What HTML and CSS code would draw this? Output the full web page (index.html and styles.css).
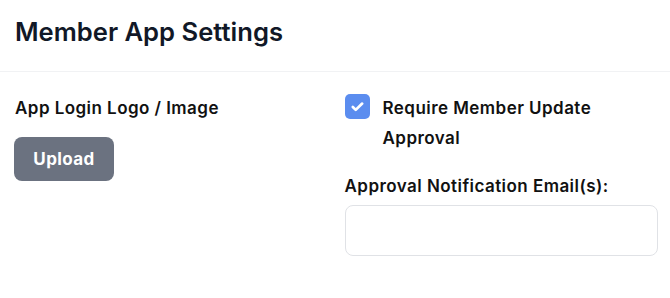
FILE: index.html
```html
<!DOCTYPE html>
<html lang="en">

<head>
    <meta charset="UTF-8">
    <meta name="viewport" content="width=device-width, initial-scale=1.0">
    <title>Member App Settings</title>
    <link rel="stylesheet" href="styles.css">
</head>

<body>
    <div class="header">
        <h1>Member App Settings</h1>
    </div>
    <div class="settings">
        <div class="column">
            <div class="fieldLabel">App Login Logo / Image</div>
            <button class="uploadBtn">Upload</button>
        </div>
        <div class="column">
            <label class="checkRow">
                <span class="checkBox">
                    <svg width="15" height="15" viewBox="0 0 16 16">
                        <path d="M3 8.6l3.1 3L13 4.9" fill="none" stroke="#fff" stroke-width="2.9"
                            stroke-linecap="round" stroke-linejoin="round" />
                    </svg>
                </span>
                <span class="checkText">Require Member Update Approval</span>
            </label>
            <div class="fieldLabel emailLabel">Approval Notification Email(s):</div>
            <input type="text" class="emailInput">
        </div>
    </div>
</body>

</html>
```

FILE: styles.css
```css
body {
    font-family: 'Inter', 'Liberation Sans', sans-serif;
    background: #fff;
    color: #111827;
    margin: 0;
    padding: 0;
}

.header {
    padding: 16px 0 0 15px;
    height: 55px;
    border-bottom: 1px solid #f1f2f4;
}

h1 {
    margin: 0;
    font-size: 25.6px;
    font-weight: 600;
    line-height: 32px;
    color: #111827;
}

.settings {
    display: grid;
    grid-template-columns: 1fr 1fr;
    column-gap: 16px;
    padding: 24px 12px 0 15px;
}

.column {
    display: flex;
    flex-direction: column;
    align-items: flex-start;
}

.fieldLabel {
    font-size: 17px;
    font-weight: 600;
    letter-spacing: 0.45px;
    line-height: 24px;
    color: #111;
}

.uploadBtn {
    margin-top: 17px;
    margin-left: -1px;
    width: 100px;
    height: 44px;
    border: none;
    border-radius: 8px;
    background: #6b7280;
    color: #fff;
    font-family: inherit;
    font-size: 17px;
    font-weight: 700;
    letter-spacing: 0.4px;
    cursor: pointer;
}

.checkRow {
    display: flex;
    align-items: flex-start;
    gap: 13px;
    margin-top: -2px;
    cursor: pointer;
}

.checkBox {
    flex: none;
    width: 25px;
    height: 25px;
    border-radius: 5px;
    background: #5b8def;
    display: flex;
    justify-content: center;
    align-items: center;
}

.checkText {
    font-size: 17px;
    font-weight: 600;
    letter-spacing: 0.45px;
    line-height: 30px;
    margin-top: -1px;
    color: #111;
    max-width: 240px;
}

.emailLabel {
    margin-top: 21px;
}

.emailInput {
    margin-top: 7px;
    width: 100%;
    box-sizing: border-box;
    height: 51px;
    border: 1px solid #e0e2e6;
    border-radius: 8px;
    outline: none;
    padding: 0 12px;
    font-family: inherit;
    font-size: 16px;
}
```
